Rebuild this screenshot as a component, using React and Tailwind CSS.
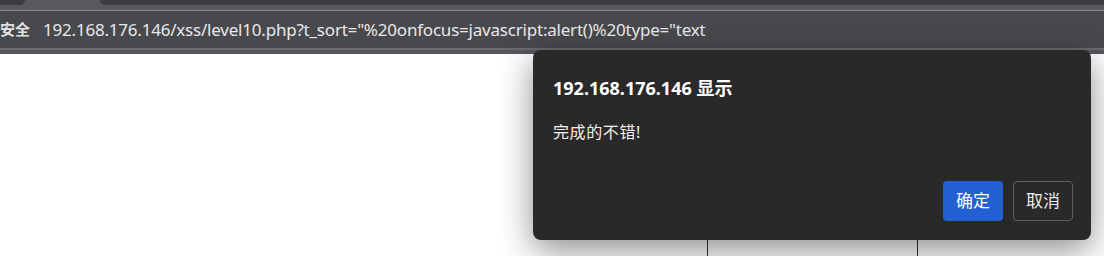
import React from "react";

const font = { fontFamily: '"Noto Sans", "Noto Sans CJK SC", sans-serif' };

function TopBar() {
    return (
        <div className="flex flex-col">
            {/* Tab strip */}
            <div className="h-[10px] bg-[#58595c] flex">
                <div className="w-[25px] h-[5px] bg-[#3a3b3e] rounded-br-[6px]" />
                <div className="w-[75px]" />
                <div className="flex-1 h-[5px] bg-[#3a3b3e] rounded-bl-[6px]" />
            </div>
            <div className="h-px bg-[#8b8c8f]" />
            {/* Address bar */}
            <div className="h-[37px] bg-[#48494c] flex items-center">
                <span className="text-[15px] font-semibold text-[#e2e2e2] w-[43px] shrink-0">安全</span>
                <span className="text-[17px] text-[#e8e8ea] tracking-[-0.21px]">
                    192.168.176.146/xss/level10.php?t_sort="%20onfocus=javascript:alert()%20type="text
                </span>
            </div>
            <div className="h-[2px] bg-[#6b6c6f]" />
            <div className="h-[4px] bg-[#57585c]" />
        </div>
    );
}

function AlertDialog() {
    return (
        <div className="absolute left-[533px] top-[50px] w-[558px] h-[190px] bg-[#292929] rounded-[8px] shadow-[0_10px_34px_rgba(0,0,0,0.45)] pt-[26px] pl-5 pr-[18px] flex flex-col">
            <div className="text-[18px] leading-[24px] font-bold text-white">192.168.176.146 显示</div>
            <div className="mt-[21px] text-[16px] leading-[22px] text-[#f0f0f0] tracking-[0.6px]">完成的不错!</div>
            <div className="mt-[38px] flex justify-end gap-[10px]">
                <button className="w-[60px] h-[40px] rounded-[4px] bg-[#2360d2] text-white text-[17px]">确定</button>
                <button className="w-[60px] h-[40px] rounded-[4px] border border-[#5e5e5e] text-[#ececec] text-[17px]">取消</button>
            </div>
        </div>
    );
}

export default function App() {
    return (
        <div className="relative w-[1104px] h-[256px] overflow-hidden bg-white" style={font}>
            <TopBar />
            {/* Page content behind the alert */}
            <div className="flex pt-[150px]">
                <div className="ml-[707px] w-[211px] h-[60px] border-x border-[#333333]" />
            </div>
            <AlertDialog />
        </div>
    );
}
